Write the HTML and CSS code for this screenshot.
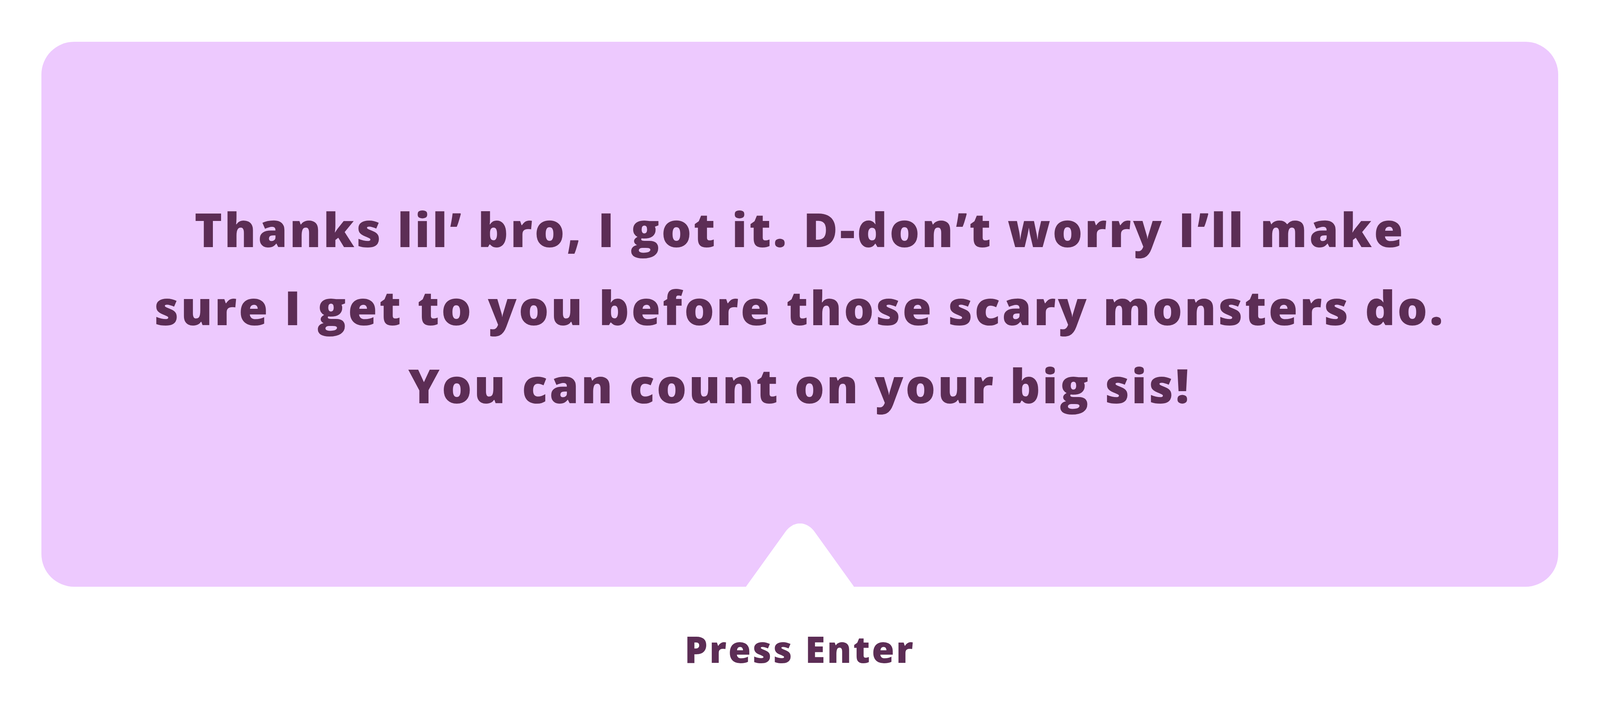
FILE: index.html
```html
<!DOCTYPE html>
<html lang="en">
<head>
<meta charset="utf-8">
<title>Dialogue</title>
<link rel="stylesheet" href="styles.css">
</head>
<body>
<main class="stage">
  <section class="dialog">
    <p class="dialog-text">Thanks lil’ bro, I got it. D-don’t worry I’ll make<br>sure I get to you before those scary monsters do.<br>You can count on your big sis!</p>
    <svg class="notch" viewBox="0 0 386 162" preserveAspectRatio="none" aria-hidden="true">
      <path d="M0 162 L140.7 21.4 A74 74 0 0 1 245.3 21.4 L386 162 Z" fill="#ffffff"/>
    </svg>
  </section>
  <div class="prompt">Press Enter</div>
</main>
</body>
</html>
```
FILE: styles.css
```css
html, body {
  margin: 0;
  padding: 0;
  background: #ffffff;
}
body {
  font-family: "Open Sans", "Liberation Sans", sans-serif;
  color: #5c2d55;
}
.stage {
  padding: 107px 107px 0 106px;
  display: flex;
  flex-direction: column;
  align-items: center;
}
.dialog {
  position: relative;
  width: 100%;
  height: 1396px;
  box-sizing: border-box;
  background: #edc9fe;
  border-radius: 84px;
  display: flex;
  align-items: center;
  justify-content: center;
  padding-bottom: 38px;
}
.dialog-text {
  margin: 0;
  font-size: 2.9417vw;
  font-weight: 800;
  line-height: 200px;
  letter-spacing: 0.046em;
  text-align: center;
  white-space: nowrap;
}
.notch {
  position: absolute;
  left: 50%;
  bottom: 0;
  width: 6.76vw;
  height: 162px;
  display: block;
  transform: translateX(-50%);
}
.prompt {
  margin-top: 70px;
  font-size: 2.2763vw;
  font-weight: 800;
  line-height: 177px;
  letter-spacing: 0.05em;
}
```
